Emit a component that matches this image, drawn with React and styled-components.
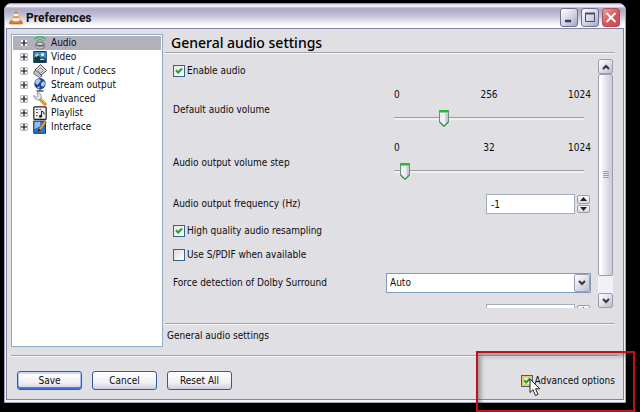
import React, { useState } from 'react';
import styled, { createGlobalStyle, css } from 'styled-components';

const GlobalStyle = createGlobalStyle`
  * {
    box-sizing: border-box;
  }
  body {
    margin: 0;
    background: #000;
    color: #0c0c10;
    font-family: 'DejaVu Sans Condensed', 'DejaVu Sans', sans-serif;
    font-size: 10px;
    line-height: 14px;
  }
  button, input, select {
    font: inherit;
    color: inherit;
  }
`;

const Page = styled.div`
  position: relative;
  padding: 3px 14px 9px 4px;
`;

const Window = styled.div`
  border: 1px solid #a3a2bd;
  border-radius: 7px 7px 0 0;
  background: #f4f4f9;
  overflow: hidden;
`;

const TitleBar = styled.header`
  display: flex;
  align-items: center;
  height: 24px;
  padding: 3px 5px 0 4px;
  background: linear-gradient(#c9c8da 0, #fff 2px, #b3b2cc 4px, #aeadc8 6px, #c4c3d8 12px, #e9e9f1 18px, #fff 22px);
  svg {
    display: block;
  }
`;

const WindowTitle = styled.h1`
  flex: 1;
  margin: 0 0 0 3px;
  font: bold 12px/18px Roboto, sans-serif;
  color: #111;
`;

const WindowButton = styled.button`
  width: 18px;
  height: 19px;
  padding: 0;
  margin-left: 3px;
  border: 1px solid ${(p) => (p.$close ? '#a8505c' : '#6f6f94')};
  border-radius: 3px;
  background: ${(p) =>
    p.$close ? 'linear-gradient(135deg, #eda09c, #d9595c 50%, #c9484e)' : 'linear-gradient(135deg, #fff, #d3d3e2 55%, #a5a5c3)'};
`;

const Content = styled.main`
  margin: 0 1px 2px;
  padding: 5px 8px 9px 4px;
  border: 1px solid #8483a4;
  background: #e0dfe3;
`;

const Columns = styled.div`
  display: flex;
  gap: 2px;
`;

const Tree = styled.ul`
  width: 152px;
  margin: 0;
  padding: 1px;
  list-style: none;
  border: 1px solid #8fabc5;
  background: #fff;
`;

const TreeItem = styled.li`
  display: flex;
  align-items: center;
  height: 14px;
  padding-left: 7px;
  background: ${(p) => (p.$selected ? '#b2b1bb' : 'none')};
  & > svg {
    flex: none;
    margin: 0 4px 0 5px;
  }
`;

const Expander = styled.button`
  display: flex;
  width: 8px;
  height: 8px;
  padding: 0;
  border: 1px solid #b4bac8;
  border-radius: 1px;
  background: #f4f4f4;
`;

const Panel = styled.section`
  flex: 1;
  min-width: 0;
`;

const PanelTitle = styled.h2`
  margin: 0;
  padding-left: 6px;
  font: 500 14px/18px 'Noto Sans', sans-serif;
  color: #000;
`;

const Rule = styled.hr`
  margin: 0;
  border: 0;
  border-top: 1px solid #a5a4ac;
  border-bottom: 1px solid #f6f6f8;
`;

const ScrollArea = styled.div`
  display: flex;
  height: 249px;
  margin: 5px 2px 15px 0;
`;

const Form = styled.form`
  flex: 1;
  padding: 0 7px 0 8px;
  overflow: hidden;
`;

const rowSizes = { check: 24, slider: 53, field: 30, choice: 32 };

const Row = styled.div`
  display: grid;
  grid-template-columns: 1fr 205px;
  align-items: center;
  height: ${(p) => rowSizes[p.$kind]}px;
`;

const CheckLabel = styled.label`
  position: relative;
  display: flex;
  align-items: center;
  gap: 2px;
  white-space: nowrap;
`;

const tick = `url("data:image/svg+xml,%3Csvg xmlns='http://www.w3.org/2000/svg' viewBox='0 0 10 10'%3E%3Cpath d='M2 4.2L4.2 6.5L8 2.5' fill='none' stroke='%2321a121' stroke-width='2'/%3E%3C/svg%3E")`;

const CheckBox = styled.input`
  appearance: none;
  width: 12px;
  height: 12px;
  margin: 0;
  border: 1px solid #34638f;
  background: linear-gradient(135deg, #dcdcd7, #fff);
  &:checked {
    background: ${tick} center / 10px 10px no-repeat, linear-gradient(135deg, #e6e6e2, #fff);
  }
  ${(p) =>
    p.$hot &&
    css`
      box-shadow: inset 0 0 0 2px #f3c663;
    `}
`;

const SliderBox = styled.div`
  align-self: start;
  width: 190px;
  margin-left: 8px;
  padding-top: 5px;
`;

const Scale = styled.div`
  display: grid;
  grid-template-columns: 1fr auto 1fr;
  margin: 0 -7px 7px 0;
  padding-right: 7px;
  span:last-child {
    justify-self: end;
    margin-right: -7px;
  }
`;

const thumb = `url("data:image/svg+xml,%3Csvg xmlns='http://www.w3.org/2000/svg' viewBox='0 0 10 18'%3E%3Cpath d='M.5 1.5H9.5V13L5 17.2L.5 13Z' fill='%23eeeef4' stroke='%23748a86'/%3E%3Cpath d='M6.5 4H9V13L6.5 15Z' fill='%23c9c9d6'/%3E%3Cpath d='M.5 1H9.5V3.5H.5Z' fill='%2325bd2b'/%3E%3Cpath d='M.6 13L5 17.2L9.4 13' fill='none' stroke='%23359551' stroke-width='1.3'/%3E%3C/svg%3E")`;

const Slider = styled.input`
  appearance: none;
  display: block;
  width: 100%;
  height: 18px;
  margin: 0;
  background: linear-gradient(#9d9ca2 0 1px, #f3f1e9 1px 3px) center / 100% 3px no-repeat;
  &::-webkit-slider-thumb {
    appearance: none;
    width: 10px;
    height: 18px;
    background: ${thumb} center / 10px 18px no-repeat;
  }
`;

const NumberField = styled.div`
  display: flex;
  gap: 2px;
  justify-self: end;
  margin-right: 1px;
`;

const NumberInput = styled.input`
  width: 89px;
  height: 20px;
  padding: 0 4px;
  border: 1px solid #a3aebd;
  background: #fff;
`;

const Spinner = styled.div`
  display: flex;
  flex-direction: column;
  gap: 1px;
  padding: 1px 0;
`;

const SpinButton = styled.button`
  display: grid;
  place-items: center;
  width: 13px;
  flex: 1;
  padding: 0;
  border: 1px solid #9b9bad;
  border-radius: 2px;
  background: linear-gradient(#fff, #d6d6e2);
`;

const SelectWrap = styled.div`
  display: grid;
  grid-template-columns: 1fr 16px;
  height: 20px;
  border: 1px solid #7f9db9;
  background: #fff;
  select {
    grid-area: 1 / 1 / 2 / 3;
    appearance: none;
    border: 0;
    padding: 0 3px;
    background: none;
  }
`;

const arrowFace = css`
  display: grid;
  place-items: center;
  padding: 0;
  border: 1px solid #9c9cb0;
  border-radius: 2px;
  background: linear-gradient(135deg, #fff, #d9d9e6 60%, #bcbccf);
`;

const SelectArrow = styled.span`
  ${arrowFace}
  grid-area: 1 / 2;
  pointer-events: none;
`;

const ScrollBar = styled.div`
  display: flex;
  flex-direction: column;
  width: 15px;
  background: #f1f1f6;
`;

const ScrollButton = styled.button`
  ${arrowFace}
  height: 15px;
`;

const ScrollThumb = styled.div`
  display: grid;
  place-items: center;
  flex: 1;
  margin-bottom: 17px;
  border: 1px solid #9c9cb0;
  border-radius: 2px;
  background: linear-gradient(90deg, #fff 2px, #f0f0f6 4px, #cbcbdb);
`;

const Hint = styled.p`
  margin: 0;
  padding: 4px 0 4px 2px;
`;

const Footer = styled.footer`
  display: flex;
  align-items: center;
  gap: 10px;
  padding: 14px 0 0 6px;
`;

const FooterRule = styled(Rule)`
  margin: 8px -3px 0 0;
`;

const Button = styled.button`
  width: 65px;
  height: 19px;
  padding: 0;
  border: 1px solid #2f5f93;
  border-radius: 3px;
  background: linear-gradient(#fff, #f1f1f6 60%, #cfcfe0);
  ${(p) =>
    p.$primary &&
    css`
      box-shadow: inset 0 2px #c5dbfb, inset 0 -2px #4d77d3, inset 1px 0 #a9c3f0, inset -1px 0 #a9c3f0;
    `}
`;

const Advanced = styled.div`
  margin-left: auto;
`;

const Pointer = styled.svg`
  position: absolute;
  left: 8px;
  top: 4px;
`;

const Callout = styled.div`
  position: absolute;
  right: 5px;
  bottom: 0;
  width: 159px;
  height: 61px;
  border: 2px solid #be1216;
  box-shadow: inset 3px 3px 4px rgba(40, 50, 50, 0.4);
  pointer-events: none;
`;

function Chevron({ up }) {
  return (
    <svg width="8" height="6" viewBox="0 0 8 6">
      <path d={up ? 'M1 5L4 2L7 5' : 'M1 1L4 4L7 1'} fill="none" stroke="#33333f" strokeWidth="2" />
    </svg>
  );
}

function Triangle({ up }) {
  return (
    <svg width="7" height="4" viewBox="0 0 7 4">
      <path d={up ? 'M0 4L3.5 0L7 4Z' : 'M0 0L3.5 4L7 0Z'} fill="#222" />
    </svg>
  );
}

const icons = {
  Audio: (
    <>
      <path d="M1.500 3Q7 -1.500 12.500 3" fill="none" stroke="#35c04a" strokeWidth="1.300" />
      <path d="M3.500 5Q7 2 10.500 5" fill="none" stroke="#4aa95a" strokeWidth="1.200" />
      <path d="M2 9Q2 6 6 6H9Q12 6.500 12 10Q12 13.500 7 13.500Q2 13 2 9Z" fill="#808285" />
      <ellipse cx="7" cy="7.800" rx="3.800" ry="1.700" fill="#d0d1d3" stroke="#55575a" strokeWidth=".8" />
      <path d="M3 10.500Q6 13 10.500 11" fill="none" stroke="#c9cacc" strokeWidth="1.200" />
    </>
  ),
  Video: (
    <>
      <path d="M.7 1.500H13.300V12.500H.7Z" fill="#3e8fce" stroke="#163c66" />
      <path d="M1.200 12V8L5 5L8 8L10 7L12.800 9V12Z" fill="#143c2c" />
      <circle cx="9.500" cy="4.500" r="1.600" fill="#e8f5ff" />
      <path d="M2 5L5 3.500L6 5L3 7ZM7 9L10 8.500L12 10H7Z" fill="#b9dcea" />
    </>
  ),
  'Input / Codecs': (
    <>
      <path d="M7.500 .8L13.500 6.500L7.500 11.500L2 6Z" fill="#fafafa" stroke="#333" />
      <path d="M7.500 3.500L10.800 6.500L7.500 9.500L4.500 6.300Z" fill="#d2d2d4" stroke="#666" strokeWidth=".8" />
      <path d="M.8 7.500L3 6.500L9 12L6.500 13.500L1 10Z" fill="#c5c6c9" stroke="#4b4b4d" strokeWidth=".8" />
    </>
  ),
  'Stream output': (
    <>
      <circle cx="7" cy="5.800" r="5.700" fill="#1d4795" />
      <path d="M3 2L6 .8L8 2.500L6 5L4.500 7L2 5ZM8 5L11 3L12.500 6L10 9L8 7.500ZM4 9L7 8.500L6 11Z" fill="#a8c7ee" />
      <path d="M3.500 13H10.500M7 11V13" stroke="#555" strokeWidth="1.300" />
    </>
  ),
  Advanced: (
    <>
      <path d="M7.500 7.500L12 12" stroke="#e98a18" strokeWidth="3.400" strokeLinecap="round" />
      <path d="M8 7.200L12.300 11.500" stroke="#ffd06a" strokeWidth="1" />
      <path d="M.8 3.500L3.500 5.300L5 4L4 .7Q7.500 .5 8.300 3.500L8.200 6L6 8Q1.500 8.500 .8 3.500Z" fill="#e4e6ef" stroke="#8388a0" strokeWidth=".8" />
    </>
  ),
  Playlist: (
    <>
      <rect x=".8" y=".8" width="12.400" height="12.600" rx="1" fill="#f0f0f0" stroke="#222" strokeWidth="1.200" />
      <path d="M3 3.500H5M6.500 3.500H8M3 6.500H5M3 9.500H4.500" stroke="#555" />
      <path d="M8.500 10V5L11 6.500V8.500" fill="none" stroke="#222" />
      <circle cx="7.500" cy="10.200" r="1.500" fill="#222" />
    </>
  ),
  Interface: (
    <>
      <path d="M.7 1H12.500V13.300H.7Z" fill="#2a74d2" stroke="#25334e" />
      <path d="M1.500 2L7 1.800L7.500 6L1.500 9Z" fill="#8dc0f4" />
      <path d="M4.500 11.500L6 8.500L11.500 .8L13.500 2.300L8 10Z" fill="#f0a72c" stroke="#6b4514" strokeWidth=".6" />
      <path d="M4.300 12L6 8.700L7.800 10Z" fill="#222" />
    </>
  ),
};

function SliderRow({ id, label, mid, value }) {
  return (
    <Row $kind="slider">
      <label htmlFor={id}>{label}</label>
      <SliderBox>
        <Scale>
          <span>0</span>
          <span>{mid}</span>
          <span>1024</span>
        </Scale>
        <Slider id={id} type="range" min="0" max="1024" defaultValue={value} />
      </SliderBox>
    </Row>
  );
}

function CheckRow({ label, checked }) {
  return (
    <Row $kind="check">
      <CheckLabel>
        <CheckBox type="checkbox" defaultChecked={checked} />
        {label}
      </CheckLabel>
    </Row>
  );
}

function Stepper({ id, value, label }) {
  return (
    <NumberField>
      <NumberInput id={id} type="text" defaultValue={value} aria-label={label} />
      <Spinner>
        <SpinButton type="button" aria-label="Increase">
          <Triangle up />
        </SpinButton>
        <SpinButton type="button" aria-label="Decrease">
          <Triangle />
        </SpinButton>
      </Spinner>
    </NumberField>
  );
}

function App() {
  const [selected, setSelected] = useState('Audio');

  return (
    <Page>
      <GlobalStyle />
      <Window>
        <TitleBar>
          <svg width="14" height="14" viewBox="0 0 14 14">
            <path d="M1 10.500L3 9H11L13 10.500L13.500 13H.5Z" fill="#e77a1c" stroke="#b85c14" strokeWidth=".6" />
            <path d="M6 .5H8L11 10Q7 12.500 3 10Z" fill="#f08a28" />
            <path d="M5.300 3H8.700L9.500 5.300H4.500ZM3.900 7.300H10.100L10.700 9.500Q7 11 3.300 9.500Z" fill="#fff" />
          </svg>
          <WindowTitle>Preferences</WindowTitle>
          <WindowButton aria-label="Minimize">
            <svg width="16" height="17" viewBox="0 0 16 17">
              <path d="M4 12H10" stroke="#3a3a5c" strokeWidth="2.500" />
            </svg>
          </WindowButton>
          <WindowButton aria-label="Maximize">
            <svg width="16" height="17" viewBox="0 0 16 17">
              <path d="M3.500 4.500H12.500V12.500H3.500Z" fill="none" stroke="#4a4a6c" />
              <path d="M3 4.500H13" stroke="#4a4a6c" strokeWidth="2" />
            </svg>
          </WindowButton>
          <WindowButton $close aria-label="Close">
            <svg width="16" height="17" viewBox="0 0 16 17">
              <path d="M3.500 4L12.500 13M12.500 4L3.500 13" stroke="#fff" strokeWidth="2" />
            </svg>
          </WindowButton>
        </TitleBar>
        <Content>
          <Columns>
            <Tree>
              {Object.keys(icons).map((name) => (
                <TreeItem key={name} $selected={name === selected} onClick={() => setSelected(name)}>
                  <Expander aria-label={`Expand ${name}`}>
                    <svg width="6" height="6" viewBox="0 0 6 6">
                      <path d="M0 3H6M3 0V6" stroke="#111" strokeWidth="1.200" />
                    </svg>
                  </Expander>
                  <svg width="14" height="14" viewBox="0 0 14 14">
                    {icons[name]}
                  </svg>
                  {name}
                </TreeItem>
              ))}
            </Tree>
            <Panel>
              <PanelTitle>General audio settings</PanelTitle>
              <Rule />
              <ScrollArea>
                <Form>
                  <CheckRow label="Enable audio" checked />
                  <SliderRow id="volume" label="Default audio volume" mid="256" value={256} />
                  <SliderRow id="step" label="Audio output volume step" mid="32" value={32} />
                  <Row $kind="field">
                    <label htmlFor="frequency">Audio output frequency (Hz)</label>
                    <Stepper id="frequency" value="-1" />
                  </Row>
                  <CheckRow label="High quality audio resampling" checked />
                  <CheckRow label="Use S/PDIF when available" />
                  <Row $kind="choice">
                    <label htmlFor="dolby">Force detection of Dolby Surround</label>
                    <SelectWrap>
                      <select id="dolby">
                        <option>Auto</option>
                      </select>
                      <SelectArrow>
                        <Chevron />
                      </SelectArrow>
                    </SelectWrap>
                  </Row>
                  <Row $kind="field">
                    <span />
                    <Stepper id="next" value="" label="Value" />
                  </Row>
                </Form>
                <ScrollBar>
                  <ScrollButton aria-label="Scroll up">
                    <Chevron up />
                  </ScrollButton>
                  <ScrollThumb>
                    <svg width="6" height="8" viewBox="0 0 6 8">
                      <path d="M0 .5H6M0 2.500H6M0 4.500H6M0 6.500H6" stroke="#9999b0" />
                    </svg>
                  </ScrollThumb>
                  <ScrollButton aria-label="Scroll down">
                    <Chevron />
                  </ScrollButton>
                </ScrollBar>
              </ScrollArea>
              <Rule />
              <Hint>General audio settings</Hint>
            </Panel>
          </Columns>
          <FooterRule />
          <Footer>
            <Button $primary>Save</Button>
            <Button>Cancel</Button>
            <Button>Reset All</Button>
            <Advanced>
              <CheckLabel>
                <CheckBox type="checkbox" defaultChecked $hot />
                Advanced options
                <Pointer width="12" height="19" viewBox="0 0 12 19">
                  <path d="M1 1V14.500L4 11.700L6.500 17.500L9 16.400L6.500 10.800H10.800Z" fill="#fff" stroke="#222" />
                </Pointer>
              </CheckLabel>
            </Advanced>
          </Footer>
        </Content>
      </Window>
      <Callout />
    </Page>
  );
}

export default App;
